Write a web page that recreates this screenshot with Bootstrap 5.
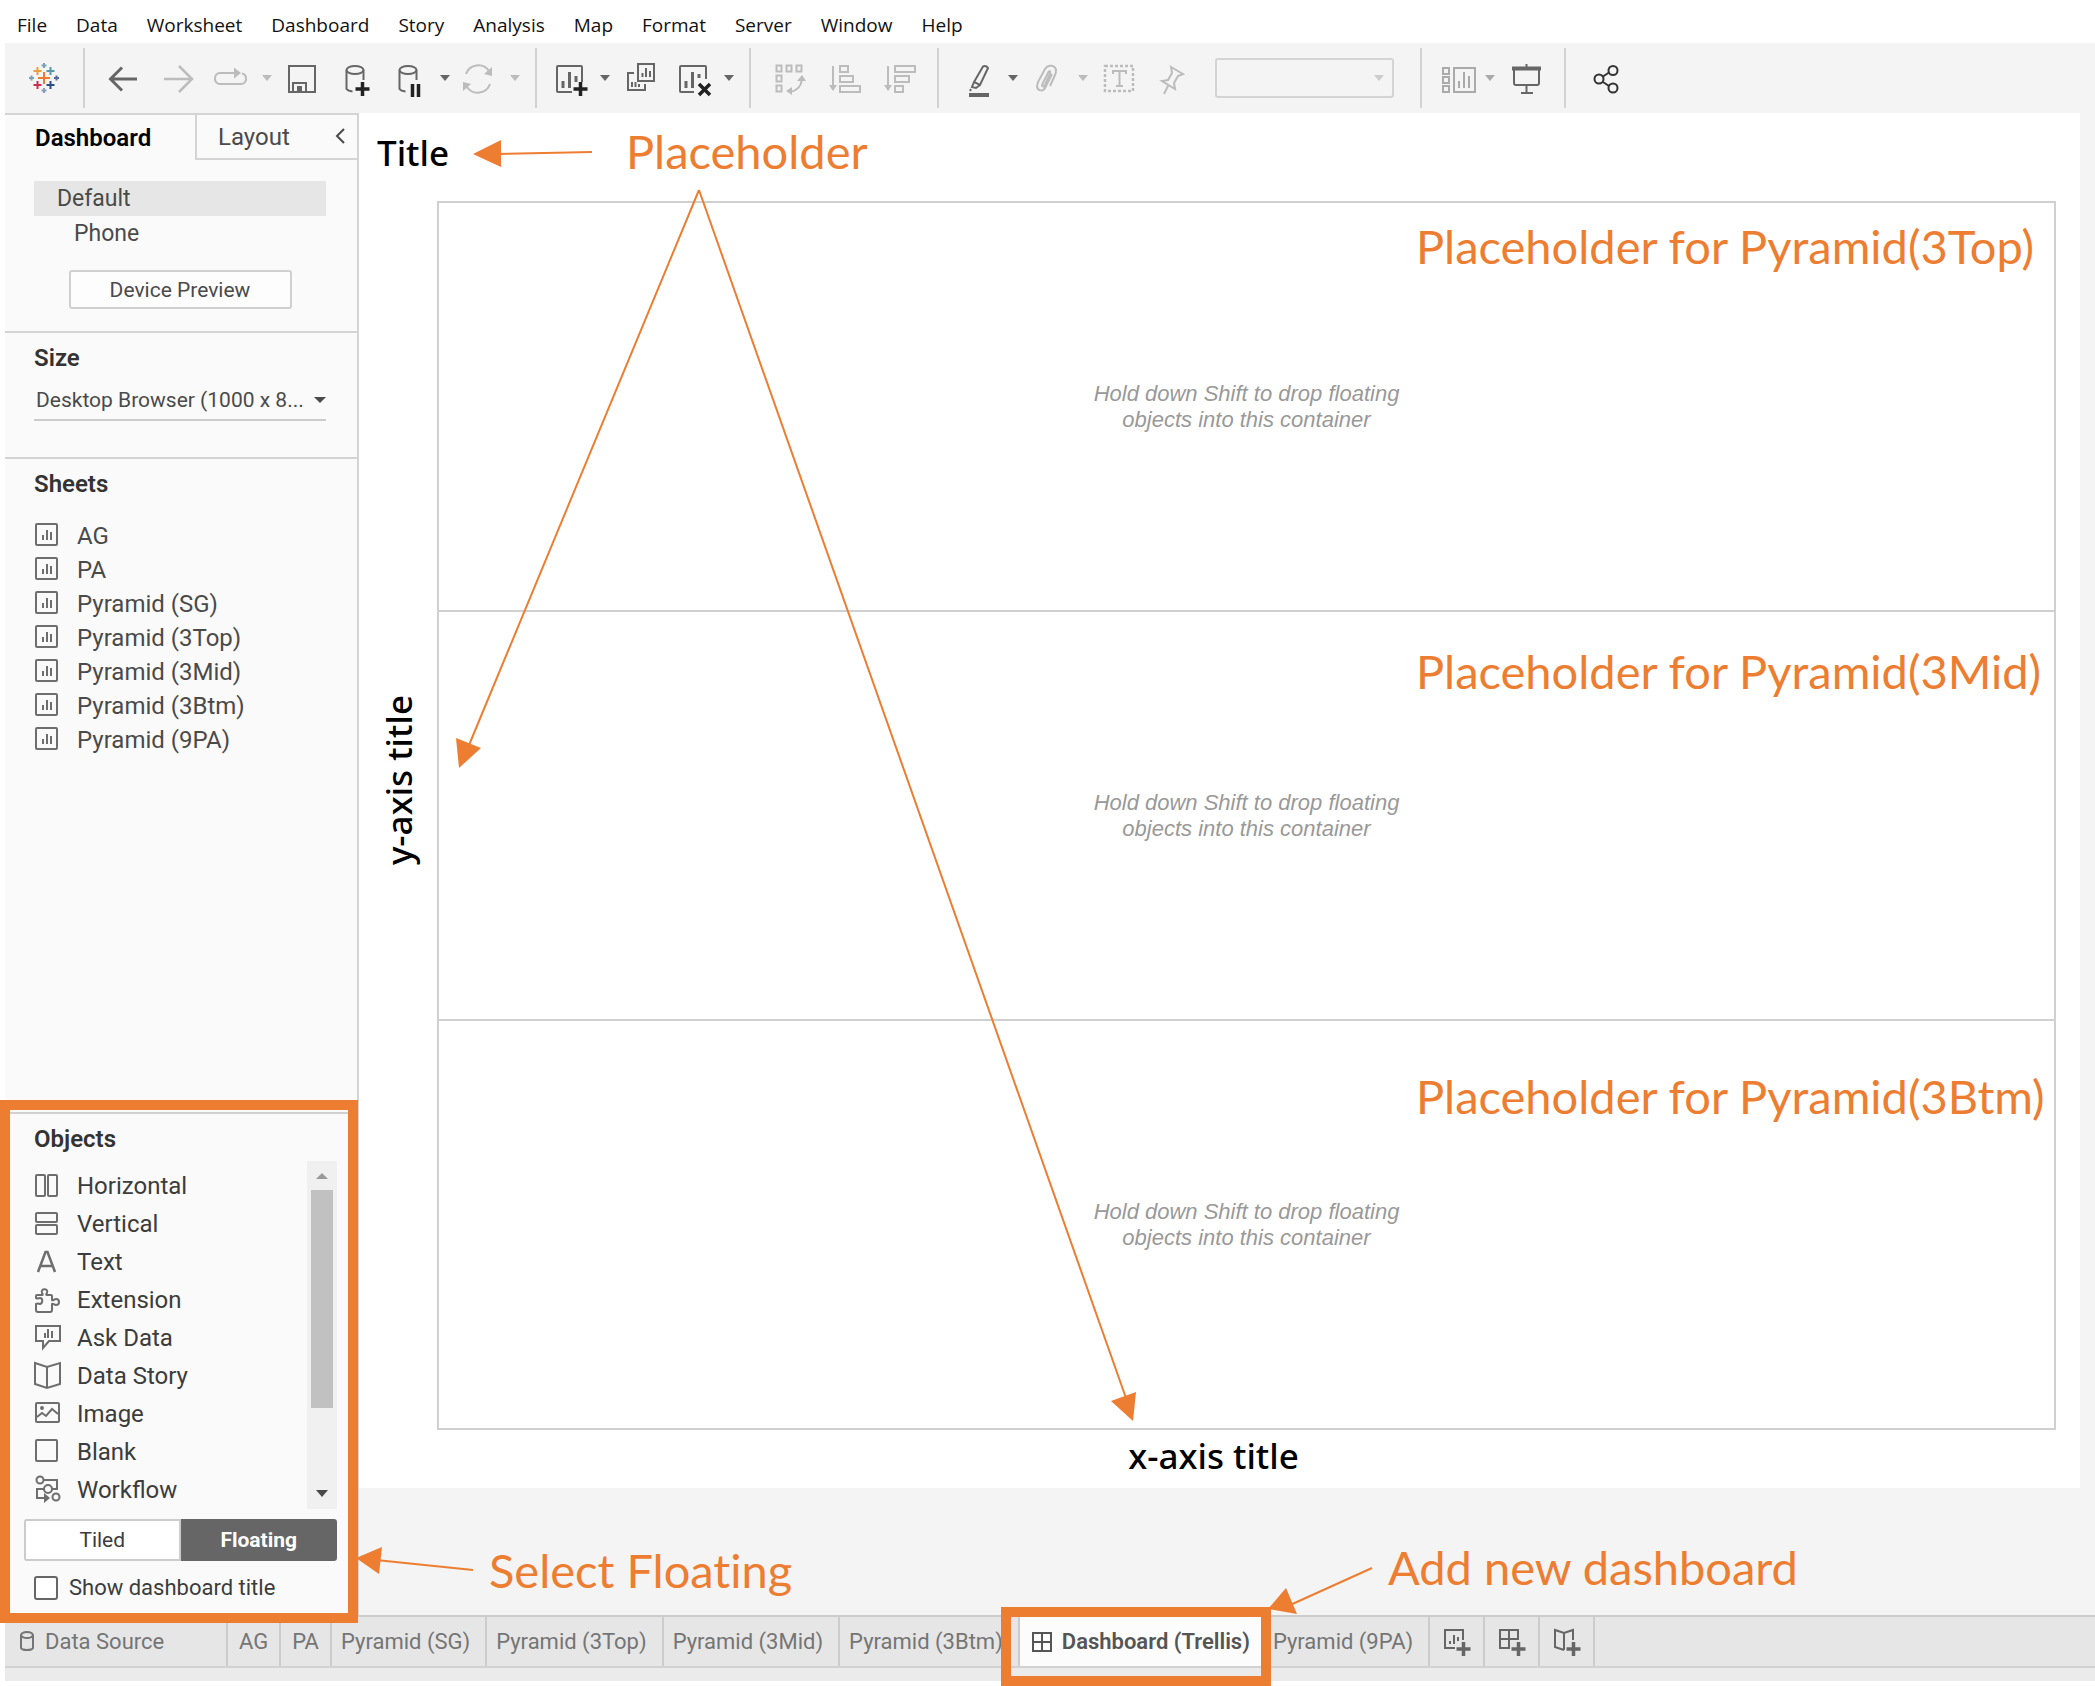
<!DOCTYPE html>
<html lang="en">
<head>
<meta charset="utf-8">
<meta name="viewport" content="width=device-width, initial-scale=1">
<title>Dashboard (Trellis)</title>
<link rel="stylesheet" href="https://cdn.jsdelivr.net/npm/bootstrap@5.3.0/dist/css/bootstrap.min.css">
<style>
  :root { --ink:#4a4a4a; --rule:#d4d4d4; --panel:#fafafa; --chrome:#f4f4f4; --note:#ed7d31; }
  body { font-family: Roboto, "Liberation Sans", sans-serif; color: var(--ink); background:#fff; font-size:21px; line-height:28px; }
  svg { display:block; overflow:visible; fill:none; stroke:currentColor; stroke-width:2; }
  button { color:inherit; background:none; border:0; padding:0; }
  .shell { min-height:100vh; padding:0 0 5px 5px; }
  /* menu */
  .menu-strip { height:43px; gap:29px; padding:8px 12px 2px; font-family:"Open Sans","Noto Sans",sans-serif; font-size:19px; line-height:28px; }
  .menu-strip a { color:#111; text-decoration:none; }
  /* toolbar */
  .tool-strip { height:70px; background:var(--chrome); padding-left:12px; color:#666; }
  .tool { width:54px; height:48px; display:flex; align-items:center; justify-content:center; flex:none; }
  .tool-narrow { width:48px; }
  .tool svg { width:32px; height:32px; }
  .drop { width:16px; height:48px; flex:none; display:flex; align-items:center; justify-content:center; }
  .drop::after, .tri { content:""; border:5px solid transparent; border-top:6px solid currentColor; border-bottom:0; }
  .off { color:#bcbcbc; }
  .soft { color:#aaa; }
  .strong { color:#333; }
  .sep { width:2px; height:60px; background:#d2d2d2; margin:0 12px; flex:none; }
  .fit-box { width:179px; margin:0 14px 0 16px; }
  .fit-box select { width:100%; height:40px; border:2px solid var(--rule); border-radius:3px; background:transparent; appearance:none; }
  .fit-box .tri { position:absolute; right:10px; top:17px; color:#ccc; }
  /* side panel */
  .side { width:354px; flex:none; background:var(--panel); border-top:2px solid var(--rule); border-right:2px solid var(--rule); }
  .side-tabs button { height:45px; font-size:24px; line-height:28px; }
  .side-tabs .on { width:190px; padding-left:30px; text-align:left; font-weight:600; color:#000; }
  .side-tabs .layout-tab { border-left:2px solid var(--rule); border-bottom:2px solid var(--rule); padding-left:21px; }
  .side-tabs .fold { border-bottom:2px solid var(--rule); padding:0 12px; }
  .block { padding:11px 31px 0 29px; border-bottom:2px solid var(--rule); }
  .block-device { padding-top:21px; }
  .block-size { padding-bottom:36px; }
  .block h2, .objects h2 { font-size:24px; line-height:28px; font-weight:600; margin:0; color:#333; }
  .device { height:35px; font-size:23px; line-height:35px; text-align:left; }
  .device.on { background:#e6e6e6; padding-left:23px; }
  .device.sub { padding-left:40px; }
  .preview { width:223px; height:39px; border:2px solid #d0d0d0; border-radius:3px; background:#fdfdfd; margin:19px auto 22px; display:block; line-height:34px; }
  .size-pick { height:40px; border-bottom:2px solid #ccc; margin-top:9px; }
  .size-pick select { width:100%; height:38px; border:0; background:transparent; appearance:none; color:var(--ink); font-size:21px; padding:0 0 0 2px; }
  .size-pick .tri { position:absolute; right:0; top:16px; border-width:6px 6px 0; }
  .rows { list-style:none; margin:0; padding:0; font-size:24px; }
  .rows li { display:flex; align-items:center; }
  .rows svg { width:24px; height:24px; margin-right:19px; color:#6e6e6e; flex:none; }
  .sheets { margin-top:21px; }
  .sheets li { height:34px; }
  .kinds li { height:38px; color:#3c3c3c; }
  .objects { border:10px solid var(--note); margin:0 -1px -8px -5px; padding:2px 11px 13px 14px; position:relative; z-index:2; background:var(--panel); }
  .objects::before { content:""; display:block; height:2px; background:#d0d0d0; margin:0 -11px 0 -14px; }
  .objects h2 { padding:11px 0 0 10px; }
  .kinds { padding:6px 0 0 10px; }
  .track { width:30px; background:#f0f0f0; display:flex; flex-direction:column; align-items:center; padding:12px 0; }
  .track .thumb { width:22px; height:218px; background:#c1c1c1; margin-top:11px; }
  .track .tri { border-width:7px 6px 0; }
  .track .up { border:6px solid transparent; border-top:0; border-bottom-color:#999; }
  .mode { margin:10px 0 0; }
  .mode button { height:42px; width:50%; font-size:21px; border:2px solid #ccc; border-radius:3px 0 0 3px; background:#fff; color:#3c3c3c; }
  .mode .on { background:#666; border-color:#666; color:#fff; font-weight:700; border-radius:0 3px 3px 0; }
  .show-title { margin-top:15px; padding-left:10px; gap:11px; font-size:22px; line-height:24px; color:#3c3c3c; }
  .show-title input { width:24px; height:24px; appearance:none; border:2px solid #666; border-radius:3px; background:#fff; margin:0; }
  /* stage */
  .stage-well { background:#f4f4f4; padding:0 15px 127px 0; min-width:0; }
  .stage { background:#fff; padding-right:24px; }
  .axis { font-family:"Noto Sans","Open Sans",sans-serif; font-weight:500; font-size:35px; line-height:44px; color:#000; }
  .stage-title { padding:18px 0 26px 18px; }
  .y-axis { width:78px; display:flex; align-items:center; padding-left:18px; padding-bottom:70px; }
  .y-axis span { writing-mode:vertical-rl; transform:rotate(180deg); }
  .x-axis { text-align:center; padding:4px 0 10px 12px; }
  .frame { border:2px solid #d0d0d0; }
  .frame section { flex:1 1 0; display:flex; align-items:center; justify-content:center; text-align:center; color:#999; font:italic 22px/26px "Liberation Sans",Arial,sans-serif; }
  .frame section + section { border-top:2px solid #d0d0d0; }
  .frame p { width:320px; margin:0; }
  /* sheet tabs */
  .tab-strip { background:#e6e6e6; height:53px; border-top:2px solid #ccc; border-bottom:2px solid #d2d2d2; color:#757575; }
  .tab-strip button { border-right:2px solid #ccc; padding:0 15px 0 9px; font-size:22px; white-space:nowrap; display:flex; align-items:center; }
  .tab-strip .src { width:223px; padding-left:14px; gap:10px; }
  .tab-strip .tiny { padding:0 11px; }
  .tab-strip .on { background:#fcfcfc; color:#555; font-weight:600; padding:0 12px; gap:10px; }
  .tab-strip .plus { width:55px; padding:0; justify-content:center; color:#666; }
  .tab-strip .plus svg { width:26px; height:32px; }
  .tab-foot { height:13px; background:#ebebeb; }
  /* tutorial notes laid over the window */
  .note { position:absolute; color:var(--note); font:400 47px/56px Lato, sans-serif; font-variant-ligatures:none; white-space:nowrap; z-index:3; }
  .note-lines { position:absolute; left:0; top:0; width:2095px; height:1686px; max-width:none; color:var(--note); pointer-events:none; z-index:3; }
  .note-lines polygon { fill:currentColor; stroke:none; }
  .note-head { left:626px; top:123px; }
  .note-top { left:1416px; top:218px; }
  .note-mid { left:1416px; top:643px; }
  .note-btm { left:1416px; top:1068px; }
  .note-float { left:489px; top:1542px; }
  .note-add { left:1388px; top:1539px; }
</style>
</head>
<body>
<div class="shell d-flex flex-column position-relative overflow-hidden">
  <nav class="menu-strip d-flex align-items-center">
    <a href="#">File</a><a href="#">Data</a><a href="#">Worksheet</a><a href="#">Dashboard</a><a href="#">Story</a><a href="#">Analysis</a><a href="#">Map</a><a href="#">Format</a><a href="#">Server</a><a href="#">Window</a><a href="#">Help</a>
  </nav>

  <div class="tool-strip d-flex align-items-center" role="toolbar">
    <button class="tool" aria-label="Start page"><svg viewBox="0 0 32 32"><path d="M16 10v12M10 16h12" stroke="#eb7c31"/><path d="M9.500 5v8M5.500 9h8" stroke="#e8a03c"/><path d="M22.500 5v8M18.500 9h8" stroke="#5b96a8"/><path d="M9.500 19v8M5.500 23h8" stroke="#c8304e"/><path d="M22.500 19v8M18.500 23h8" stroke="#2d4d8a"/><path d="M16 1v5M13.500 3.500h5M3.500 13.500v5M1 16h5" stroke="#7ba3b5"/><path d="M28.500 13.500v5M26 16h5" stroke="#5a6aa0"/><path d="M16 26v5M13.500 28.500h5" stroke="#8b9bc0"/></svg></button>
    <span class="sep"></span>
    <button class="tool" aria-label="Back"><svg viewBox="0 0 32 32"><path d="M29 17H3M14 5.500 2.500 17 14 28.500" stroke-width="3"/></svg></button>
    <button class="tool off" aria-label="Forward"><svg viewBox="0 0 32 32"><path d="M2 17h27M17 4l13 13-13 13" stroke-width="2.500"/></svg></button>
    <button class="tool off" aria-label="Redo"><svg viewBox="0 0 32 32"><path d="M18 11H4a5 5 0 0 0-5 5.500A5 5 0 0 0 4 22h21a5 5 0 0 0 5-5.500c0-3-1.500-4.500-4-5" /><path d="M18 5.500 25 11l-7 5.500z" fill="currentColor" stroke="none"/></svg></button>
    <button class="drop off" aria-label="Redo menu"></button>
    <button class="tool" aria-label="Save"><svg viewBox="0 0 32 32"><path d="M3 4h26v26H3zM7 30v-9h13v9"/><path d="M11 24h5v5h-5z" fill="currentColor" stroke="none"/></svg></button>
    <button class="tool" aria-label="New data source"><svg viewBox="0 0 32 32"><ellipse cx="15" cy="8" rx="8.500" ry="4"/><path d="M6.500 8v19q1.500 2 6 2.500M23.500 8v10"/><path d="M22.500 20v14M15.500 27h14" stroke="#222" stroke-width="3.500"/></svg></button>
    <button class="tool" aria-label="Pause updates"><svg viewBox="0 0 32 32"><ellipse cx="14" cy="8" rx="8.500" ry="4"/><path d="M5.500 8v19q1.500 2 6 2.500M22.500 8v10"/><path d="M18.500 22v13M24.500 22v13" stroke="#222" stroke-width="3.500"/></svg></button>
    <button class="drop" aria-label="Pause menu"></button>
    <button class="tool off" aria-label="Refresh"><svg viewBox="0 0 32 32"><path d="M2 12a13 13 0 0 1 23-3M26 22a13 13 0 0 1-23 3"/><path d="M28 5v9l-8-2zM-1 29v-9l8 2z" fill="currentColor" stroke="none"/></svg></button>
    <button class="drop off" aria-label="Refresh menu"></button>
    <span class="sep"></span>
    <button class="tool tool-narrow" aria-label="New worksheet"><svg viewBox="0 0 32 32"><path d="M15 30H1a1 1 0 0 1-1-1V5a1 1 0 0 1 1-1h23a1 1 0 0 1 1 1v15"/><path d="M6 26v-7M12.500 26V10M19 20v-6" stroke-width="3"/><path d="M23.500 20v14M16.500 27h14" stroke="#222" stroke-width="3.500"/></svg></button>
    <button class="drop" aria-label="New menu"></button>
    <button class="tool" aria-label="Duplicate"><svg viewBox="0 0 32 32"><path d="M14 2h16v17H14zM10 11H4v17h17v-6M18.500 15v-4M22 15V6M26 15V9M8 25v-5M11.500 25v-5M15 25v-3"/></svg></button>
    <button class="tool" aria-label="Clear sheet"><svg viewBox="0 0 32 32"><path d="M16 30H3a1 1 0 0 1-1-1V5a1 1 0 0 1 1-1h24a1 1 0 0 1 1 1v12"/><path d="M8 26v-7M14.500 26V10M21 16v-4" stroke-width="3"/><path d="m21 22 11 11M32 22 21 33" stroke="#222" stroke-width="3.500"/></svg></button>
    <button class="drop" aria-label="Clear menu"></button>
    <span class="sep"></span>
    <button class="tool off" aria-label="Swap"><svg viewBox="0 0 32 32"><path d="M2.500 3.500h5v6h-5zM12.500 3.500h5v6h-5zM22.500 3.500h5v6h-5zM2.500 13.500h5v6h-5zM2.500 23.500h5v6h-5zM28 17q-1 11-12 13"/><path d="m23 19 5-6 4 6zM18 25v8l-6-4z" fill="currentColor" stroke="none"/></svg></button>
    <button class="tool off" aria-label="Sort ascending"><svg viewBox="0 0 32 32"><path d="M5 4v24M12 4h8v6h-8zM12 14h13v6H12zM12 24h20v6H12z"/><path d="M1 23h8l-4 6z" fill="currentColor" stroke="none"/></svg></button>
    <button class="tool off" aria-label="Sort descending"><svg viewBox="0 0 32 32"><path d="M6 4v24M13 4h20v6H13zM13 14h14v6H13zM13 24h8v6h-8z"/><path d="M2 23h8l-4 6z" fill="currentColor" stroke="none"/></svg></button>
    <span class="sep"></span>
    <button class="tool" aria-label="Highlight"><svg viewBox="0 0 32 32"><path d="M21 4.500q3-1.500 5 1.500l-8 17-6-3zM12 20l-2 5 4 1 4-3M9 27l-1 2"/><path d="M7 33h20" stroke-width="4"/></svg></button>
    <button class="drop" aria-label="Highlight menu"></button>
    <button class="tool off" aria-label="Group"><svg viewBox="0 0 32 32"><path d="m20 12-7 14c-2 4-8 3-8-2l1-4 7-13c3-5 10-4 11 1 0 2 0 3-1 5l-5 11M16 11l-6 12c0 2 2 2 3 0l5-11c1-3-1-4-2-1"/></svg></button>
    <button class="drop off" aria-label="Group menu"></button>
    <button class="tool off" aria-label="Show labels"><svg viewBox="0 0 32 32"><rect x="3" y="4" width="28" height="25" stroke-dasharray="3 2" stroke-width="2.500"/><path d="M11 12V9h13v3M17.500 9v15M14 24h7"/></svg></button>
    <button class="tool off" aria-label="Pin"><svg viewBox="0 0 32 32"><path d="m15 5 12 7-5 2-4 7 1 6-13-8 6-1 4-7zM12 24 8 32"/></svg></button>
    <div class="fit-box position-relative"><select aria-label="Fit" disabled><option></option></select><span class="tri"></span></div>
    <span class="sep"></span>
    <button class="tool tool-narrow soft" aria-label="Show cards"><svg viewBox="0 0 32 32"><path d="M1 6h6v6H1zM1 15h6v6H1zM1 24h6v6H1zM12 6h21v24H12zM17 26v-7M22 26V10M27 26V14"/></svg></button>
    <button class="drop soft" aria-label="Cards menu"></button>
    <button class="tool" aria-label="Presentation"><svg viewBox="0 0 32 32"><path d="M5 6v15q0 2 2 2h21q2 0 2-2V6M17.500 2v3M17.500 23v8M12 31h12"/><path d="M3 6.500h29" stroke-width="4"/></svg></button>
    <span class="sep"></span>
    <button class="tool strong" aria-label="Share"><svg viewBox="0 0 32 32" stroke-width="2.500"><circle cx="10" cy="17" r="4.500"/><circle cx="24" cy="8.500" r="4.500"/><circle cx="24" cy="26" r="4.500"/><path d="m14 14.500 6-4M14 20l6 4"/></svg></button>
  </div>

  <main class="d-flex flex-grow-1">
    <aside class="side d-flex flex-column">
      <div class="side-tabs d-flex">
        <button class="on">Dashboard</button>
        <button class="layout-tab flex-grow-1 text-start">Layout</button>
        <button class="fold" aria-label="Collapse"><svg width="10" height="16" viewBox="0 0 10 16"><path d="M9 0 2 7l7 7"/></svg></button>
      </div>
      <div class="block block-device">
        <button class="device on d-block w-100">Default</button>
        <button class="device sub d-block w-100">Phone</button>
        <button class="preview">Device Preview</button>
      </div>
      <div class="block block-size">
        <h2>Size</h2>
        <div class="size-pick position-relative"><select aria-label="Size"><option>Desktop Browser (1000 x 8...</option></select><span class="tri"></span></div>
      </div>
      <div class="block border-0 flex-grow-1">
        <h2>Sheets</h2>
        <ul class="rows sheets" id="sheetList"></ul>
      </div>
      <div class="objects">
        <h2>Objects</h2>
        <div class="d-flex justify-content-between mt-2">
          <ul class="rows kinds">
            <li><svg viewBox="0 0 24 24"><rect x="2" y="1" width="9" height="21" rx="1"/><rect x="14" y="1" width="9" height="21" rx="1"/></svg>Horizontal</li>
            <li><svg viewBox="0 0 24 24"><rect x="2" y="1" width="21" height="9" rx="1"/><rect x="2" y="13" width="21" height="9" rx="1"/></svg>Vertical</li>
            <li><svg viewBox="0 0 24 24"><path d="m4 22 7.500-20h2L21 22M7 16h11" stroke-width="2.500"/></svg>Text</li>
            <li><svg viewBox="0 0 24 24"><path d="M2 20V16c2-1 3 0 4 0 3-1 3-6 0-6-1 0-2 1-4 0V8q0-1 1-1h5c1 0 1-1 0-2-2-5 7-5 5 0-1 1-1 2 0 2h4q1 0 1 1v4c1 1 2-1 4-1 4 0 4 6 0 6-2 0-3-2-4-1v6q0 2-2 2H4q-2 0-2-2z"/></svg>Extension</li>
            <li><svg viewBox="0 0 24 24"><path d="M2 0h24v15H15l-6 7v-7H2zM11 12V7M14 12V3M18 12V5"/></svg>Ask Data</li>
            <li><svg viewBox="0 0 24 24"><path d="m1-1 12 4 13-4v21l-13 4-12-4zM13 3v21" /></svg>Data Story</li>
            <li><svg viewBox="0 0 24 24"><rect x="2" y="1" width="23" height="19" rx="1"/><path d="m3 15 5-4 4 3 6-7 6 5"/><circle cx="8" cy="6" r="1"/></svg>Image</li>
            <li><svg viewBox="0 0 24 24"><rect x="2" y="0" width="21" height="21" rx="1"/></svg>Blank</li>
            <li><svg viewBox="0 0 24 24"><circle cx="6" cy="2" r="3.500"/><circle cx="14" cy="11" r="4"/><circle cx="22" cy="19" r="3.500"/><path d="M10 2h13v9h-5M10 11H3v9h7"/><path d="m10 15 6 5-6 5z" fill="currentColor" stroke="none"/></svg>Workflow</li>
          </ul>
          <div class="track"><span class="up"></span><span class="thumb"></span><span class="tri mt-auto"></span></div>
        </div>
        <div class="mode d-flex"><button>Tiled</button><button class="on">Floating</button></div>
        <div class="show-title d-flex align-items-center"><input type="checkbox" id="showTitle"><label for="showTitle">Show dashboard title</label></div>
      </div>
    </aside>

    <div class="stage-well flex-grow-1 d-flex">
      <div class="stage flex-grow-1 d-flex flex-column">
        <h1 class="axis stage-title m-0">Title</h1>
        <div class="d-flex flex-grow-1">
          <div class="y-axis axis flex-shrink-0"><span>y-axis title</span></div>
          <div class="frame flex-grow-1 d-flex flex-column">
            <section><p>Hold down Shift to drop floating objects into this container</p></section>
            <section><p>Hold down Shift to drop floating objects into this container</p></section>
            <section><p>Hold down Shift to drop floating objects into this container</p></section>
          </div>
        </div>
        <div class="axis x-axis">x-axis title</div>
      </div>
    </div>
  </main>

  <div class="tab-strip d-flex">
    <button class="src"><svg width="16" height="22" viewBox="0 0 16 22"><path d="M2 4v13q1 2 6 2t6-2V4q-1-3-6-3T2 4q1 3 6 3t6-3"/></svg>Data Source</button>
    <button class="tiny">AG</button><button class="tiny">PA</button><button>Pyramid (SG)</button><button>Pyramid (3Top)</button><button>Pyramid (3Mid)</button><button>Pyramid (3Btm)</button>
    <button class="on"><svg width="20" height="20" viewBox="0 0 20 20"><path d="M1 1h18v18H1zM10 1v18M1 10h18"/></svg>Dashboard (Trellis)</button>
    <button>Pyramid (9PA)</button>
    <button class="plus" aria-label="New worksheet"><svg viewBox="0 0 26 32"><path d="M11 22H1V4h18v10M6 18v-3M10 18V9M14 15v-4"/><path d="M19.500 16v14M12.500 23h14" stroke-width="3.500"/></svg></button>
    <button class="plus" aria-label="New dashboard"><svg viewBox="0 0 26 32"><path d="M11 22H1V4h18v10M10 4v18M1 13h18"/><path d="M19.500 16v14M12.500 23h14" stroke-width="3.500"/></svg></button>
    <button class="plus" aria-label="New story"><svg viewBox="0 0 26 32"><path d="M10 24 1 21V4l9 3 9-3v10M10 7v17"/><path d="M19.500 16v14M12.500 23h14" stroke-width="3.500"/></svg></button>
  </div>
  <div class="tab-foot"></div>

  <svg class="note-lines" viewBox="0 0 2095 1686">
    <path d="M592 152 495 154M699 190 467 750M699 190l427 1208M473 1570 376 1560M1372 1568l-84 38"/>
    <polygon points="473,154 501,140 501,167"/>
    <polygon points="459,768 456,738 481,748"/>
    <polygon points="1133,1421 1111,1401 1136,1392"/>
    <polygon points="356,1558 382,1547 379,1574"/>
    <polygon points="1268,1609 1286,1588 1297,1614"/>
    <rect x="1006" y="1612" width="260" height="69" stroke-width="10"/>
  </svg>
  <span class="note note-head">Placeholder</span>
  <span class="note note-top">Placeholder for Pyramid(3Top)</span>
  <span class="note note-mid">Placeholder for Pyramid(3Mid)</span>
  <span class="note note-btm">Placeholder for Pyramid(3Btm)</span>
  <span class="note note-float">Select Floating</span>
  <span class="note note-add">Add new dashboard</span>
</div>
<script>
  const sheets = ["AG", "PA", "Pyramid (SG)", "Pyramid (3Top)", "Pyramid (3Mid)", "Pyramid (3Btm)", "Pyramid (9PA)"];
  document.getElementById("sheetList").innerHTML = sheets.map(name =>
    `<li><svg viewBox="0 0 24 24"><rect x="2" y="0" width="21" height="21" rx="1"/><path d="M9 16v-5M13 16V6M17 16V8"/></svg>${name}</li>`).join("");
</script>
<script src="https://cdn.jsdelivr.net/npm/bootstrap@5.3.0/dist/js/bootstrap.bundle.min.js"></script>
</body>
</html>
